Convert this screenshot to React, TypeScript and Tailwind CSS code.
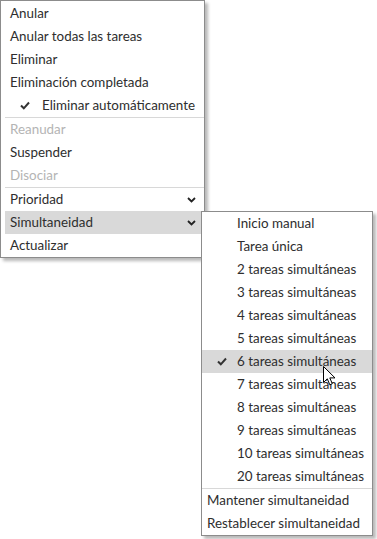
import React from "react";

const Check = () => (
  <svg width="10" height="9" viewBox="0 0 10 9" className="block">
    <path d="M1 4.5 L3.8 7.3 L9 1.5" stroke="#333" strokeWidth="2" fill="none" />
  </svg>
);

const Chevron = () => (
  <svg width="9" height="6" viewBox="0 0 9 6" className="block">
    <path d="M1 1 L4.5 4.5 L8 1" stroke="#222" strokeWidth="1.8" fill="none" />
  </svg>
);

type Item = { label: string; disabled?: boolean; checked?: boolean; sub?: boolean; active?: boolean; sep?: boolean };

const mainItems: Item[] = [
  { label: "Anular" },
  { label: "Anular todas las tareas" },
  { label: "Eliminar" },
  { label: "Eliminación completada" },
  { label: "Eliminar automáticamente", checked: true },
  { label: "", sep: true },
  { label: "Reanudar", disabled: true },
  { label: "Suspender" },
  { label: "Disociar", disabled: true },
  { label: "", sep: true },
  { label: "Prioridad", sub: true },
  { label: "Simultaneidad", sub: true, active: true },
  { label: "Actualizar" },
];

const subOptions = [
  "Inicio manual",
  "Tarea única",
  "2 tareas simultáneas",
  "3 tareas simultáneas",
  "4 tareas simultáneas",
  "5 tareas simultáneas",
  "6 tareas simultáneas",
  "7 tareas simultáneas",
  "8 tareas simultáneas",
  "9 tareas simultáneas",
  "10 tareas simultáneas",
  "20 tareas simultáneas",
];

export default function App() {
  return (
    <div
      className="relative w-[377px] h-[539px] bg-white text-[13.4px] text-[#2e2e2e]"
      style={{ fontFamily: "Lato, 'Noto Sans', sans-serif" }}
    >
      <div className="w-[205px] border border-[#8c8c8c] bg-white pl-[4px] pt-[1px] shadow-[3px_3px_3px_rgba(0,0,0,0.28)]">
        {mainItems.map((it, i) =>
          it.sep ? (
            <div key={i} className="h-px bg-[#d8d8d8]" />
          ) : (
            <div
              key={i}
              className={`flex h-[23px] items-center pr-[8px] ${it.active ? "bg-[#d9d9d9]" : ""} ${
                it.disabled ? "text-[#b4b4b4]" : ""
              } ${it.checked ? "pl-[15px]" : "pl-[5px]"}`}
            >
              {it.checked && (
                <span className="mr-[12px]">
                  <Check />
                </span>
              )}
              <span className="flex-1">{it.label}</span>
              {it.sub && <Chevron />}
            </div>
          )
        )}
      </div>

      <div className="absolute left-[201px] top-[211px] w-[172px] border border-[#8c8c8c] bg-white shadow-[3px_3px_3px_rgba(0,0,0,0.28)]">
        {subOptions.map((s, i) => (
          <div
            key={i}
            className={`flex h-[23px] items-center pl-[15px] ${i === 6 ? "bg-[#d9d9d9]" : ""}`}
          >
            <span className="w-[20px]">{i === 6 && <Check />}</span>
            <span>{s}</span>
          </div>
        ))}
        <div className="h-px bg-[#d8d8d8]" />
        <div className="flex h-[23px] items-center pl-[5px]">Mantener simultaneidad</div>
        <div className="flex h-[23px] items-center pl-[5px]">Restablecer simultaneidad</div>
      </div>

      <svg
        className="absolute left-[323px] top-[366px]"
        width="14"
        height="21"
        viewBox="0 0 14 21"
      >
        <path
          d="M0.5 0.5 L0.5 16.5 L4.3 12.8 L6.8 18.8 L9.3 17.7 L6.8 11.9 L12 11.9 Z"
          fill="#fff"
          stroke="#000"
          strokeWidth="1"
        />
      </svg>
    </div>
  );
}
